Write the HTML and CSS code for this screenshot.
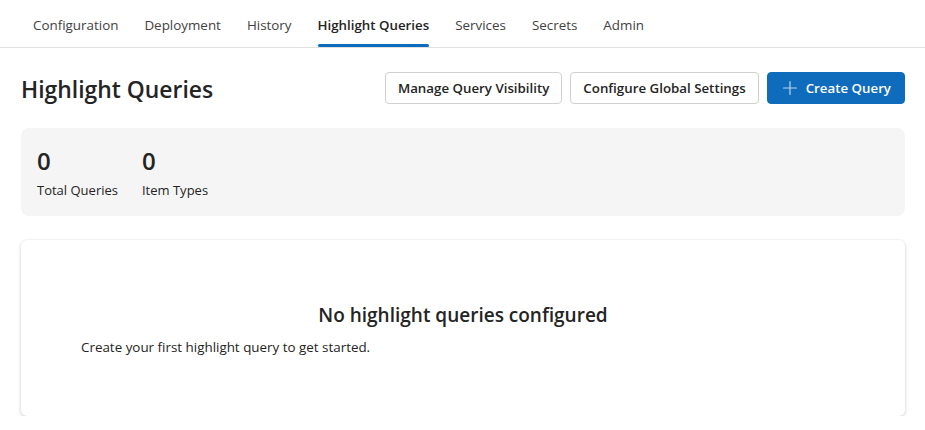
FILE: index.html
```html
<!DOCTYPE html>
<html lang="en">
<head>
<meta charset="utf-8">
<title>Highlight Queries</title>
<link rel="stylesheet" href="styles.css">
</head>
<body>
<nav class="tabs">
  <a class="tab">Configuration</a>
  <a class="tab">Deployment</a>
  <a class="tab">History</a>
  <a class="tab active">Highlight Queries</a>
  <a class="tab">Services</a>
  <a class="tab">Secrets</a>
  <a class="tab">Admin</a>
</nav>
<main class="page">
  <header class="page-header">
    <h1 class="title">Highlight Queries</h1>
    <div class="actions">
      <button class="btn">Manage Query Visibility</button>
      <button class="btn">Configure Global Settings</button>
      <button class="btn primary"><svg class="plus" viewBox="0 0 16 16" width="16" height="16"><path d="M8 1.5v13M1.5 8h13" stroke="currentColor" stroke-width="1.2" stroke-linecap="round" fill="none"/></svg>Create Query</button>
    </div>
  </header>
  <section class="stats">
    <div class="stat"><div class="stat-value">0</div><div class="stat-label">Total Queries</div></div>
    <div class="stat"><div class="stat-value">0</div><div class="stat-label">Item Types</div></div>
  </section>
  <section class="empty">
    <h2 class="empty-title">No highlight queries configured</h2>
    <p class="empty-text">Create your first highlight query to get started.</p>
  </section>
</main>
</body>
</html>
```
FILE: styles.css
```css
* { box-sizing: border-box; }
body {
  margin: 0;
  font-family: "Open Sans", "Noto Sans", sans-serif;
  color: #242424;
  background: #fff;
}
.tabs {
  display: flex;
  padding: 0 20px;
  height: 48px;
  border-bottom: 1px solid #e0e0e0;
}
.tab {
  position: relative;
  display: flex;
  align-items: center;
  padding: 3px 13px 0;
  font-size: 13.4px;
  color: #424242;
}
.tab.active {
  color: #242424;
  font-weight: 600;
  font-size: 13.3px;
}
.tab.active::after {
  content: "";
  position: absolute;
  left: 13px;
  right: 13px;
  bottom: 0;
  height: 3px;
  border-radius: 2px;
  background: #0f6cbd;
}
.page {
  padding: 24px 20px 0 21px;
}
.page-header {
  display: flex;
  align-items: center;
  justify-content: space-between;
  height: 32px;
}
.title {
  margin: 2px 0 0;
  font-size: 22.9px;
  font-weight: 600;
  color: #242424;
}
.actions {
  display: flex;
  gap: 8px;
}
.btn {
  display: flex;
  align-items: center;
  gap: 8px;
  height: 32px;
  padding: 0 12px;
  font-family: inherit;
  font-size: 13.3px;
  font-weight: 600;
  color: #242424;
  background: #fff;
  border: 1px solid #d1d1d1;
  border-radius: 4px;
}
.btn.primary {
  background: #0f6cbd;
  border-color: #0f6cbd;
  color: #fff;
  padding: 0 13px 0 14px;
}
.plus {
  color: rgba(255,255,255,0.7);
}
.stats {
  display: flex;
  gap: 24px;
  margin-top: 24px;
  height: 88px;
  padding: 16px 16px;
  background: #f5f5f5;
  border-radius: 8px;
}
.stat-value {
  font-size: 24px;
  font-weight: 600;
  line-height: 34px;
}
.stat-label {
  font-size: 13px;
  line-height: 18px;
  margin-top: 3px;
  color: #242424;
}
.empty {
  margin-top: 24px;
  height: 176px;
  background: #fff;
  border-radius: 6px;
  box-shadow: 0 0 2px rgba(0,0,0,0.12), 0 2px 4px rgba(0,0,0,0.14);
  padding: 61px 60px 0;
}
.empty-title {
  margin: 0;
  text-align: center;
  font-size: 19px;
  font-weight: 600;
  line-height: 28px;
}
.empty-text {
  margin: 9px 0 0;
  font-size: 13.4px;
  line-height: 18px;
}
```
